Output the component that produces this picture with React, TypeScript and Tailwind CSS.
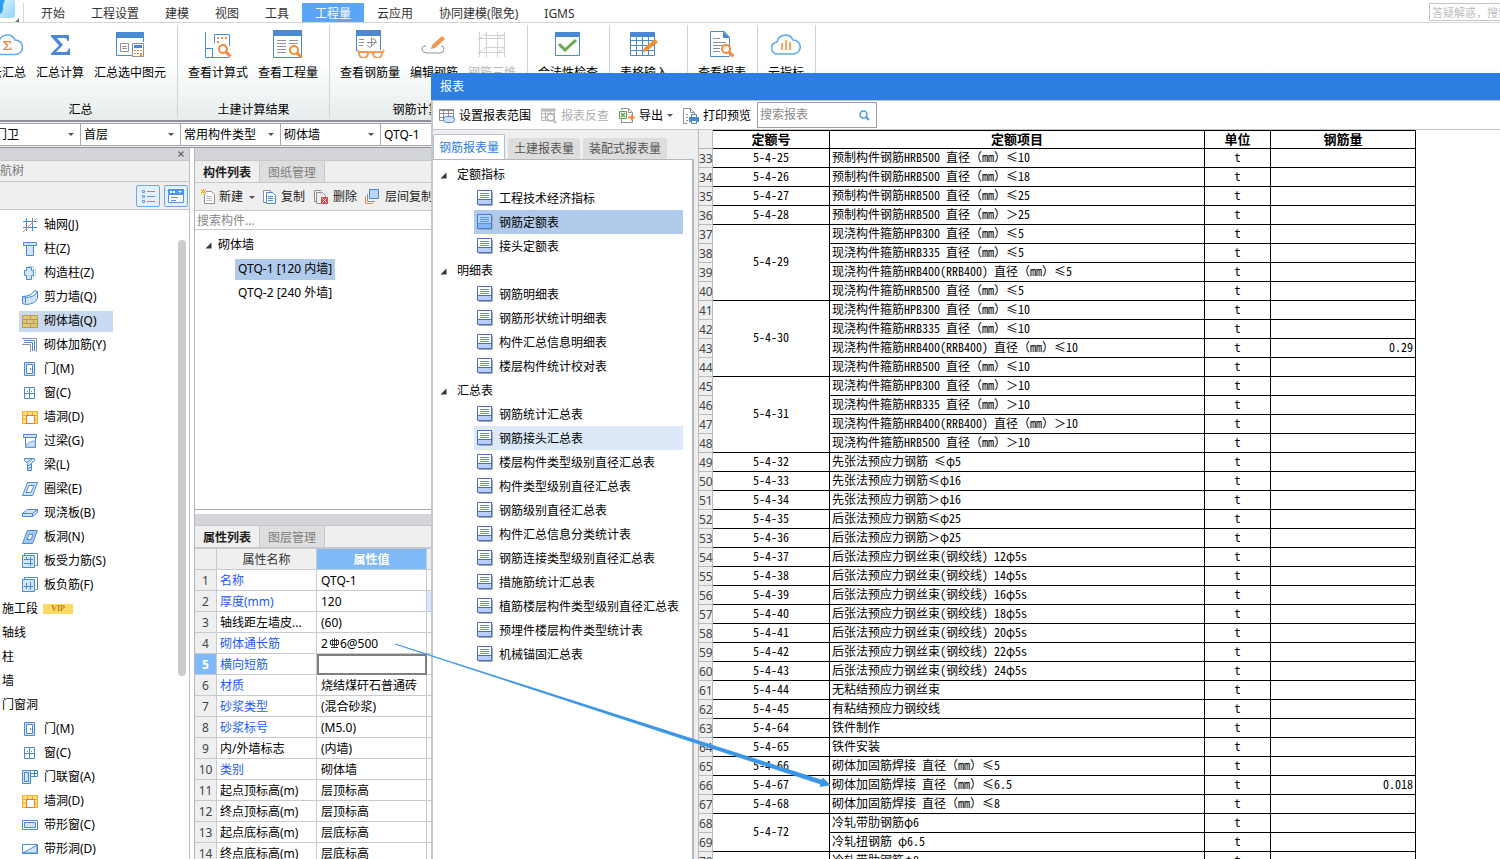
import { useState } from 'react'
import type { ReactNode } from 'react'

const B = '#4a8ad4'
const O = '#f5893d'
const G = '#8d9299'

const menus = ['开始', '工程设置', '建模', '视图', '工具', '工程量', '云应用', '协同建模(限免)', 'IGMS']

function Sigma({ color, x = 0, y = 0, s = 1 }: { color: string; x?: number; y?: number; s?: number }) {
  return (
    <path
      transform={`translate(${x} ${y}) scale(${s})`}
      d="M0 0h18v6h-1.500q-.5-3-3.500-3H6l6 7-7 7h9q3 0 3.500-3.500H19V20H0v-1.500L8 10.500 0 1.500z"
      fill={color}
    />
  )
}

function Magnifier({ x, y, color = O }: { x: number; y: number; color?: string }) {
  return (
    <g transform={`translate(${x} ${y})`} fill="none" stroke={color}>
      <circle cx="5" cy="5" r="4" strokeWidth="2" fill="#fff" />
      <path d="M8 8l4.500 4.500" strokeWidth="3" />
    </g>
  )
}

const ribbonIcons: Record<string, ReactNode> = {
  cloudSum: (
    <>
      <path d="M7 24.500a6.500 6.500 0 01-1-13 8.500 8.500 0 0116-1.500 7.200 7.200 0 01.500 14.500z" fill="none" stroke="#62aaf3" strokeWidth="1.600" />
      <Sigma color={O} x={10} y={11} s={0.45} />
    </>
  ),
  sigma: <Sigma color={B} x={6} y={5} />,
  selected: (
    <>
      <path d="M1.500 4v21.500h16M28.500 4v8" stroke={B} fill="none" />
      <path d="M1 2h28v6H1z" fill={B} />
      <path d="M5.500 13.500h8v8h-8zM7 16.500h5M7 18.500h5" stroke={G} fill="none" />
      <path d="M17.500 13.500h11v13h-11z" stroke={G} fill="#fff" />
      <path d="M19 15h8v3h-8z" fill={B} />
      <path d="M19 20h2v1h-2zM22 20h2v1h-2zM25 20h2v1h-2zM19 23h2v1h-2zM22 23h2v1h-2zM25 23h2v3h-2z" fill={O} />
    </>
  ),
  formula: (
    <>
      <path d="M2.500 2v25.500H26M2.500 18.500h7v9M11.500 13V4.500h15V16" stroke={B} fill="none" />
      <path d="M14 7h2v2h-2zM18 7h2v2h-2zM22 7h2v2h-2zM14 11h2v2h-2z" fill={O} />
      <Magnifier x={15} y={14} />
    </>
  ),
  quantity: (
    <>
      <path d="M.500 4v23.500h28V4" stroke={B} fill="none" />
      <path d="M0 0h29v6H0z" fill={B} />
      <path d="M4 10.500h9M4 13.500h9M4 16.500h9M4 19.500h9M4 22.500h9M16 10.500h9M16 13.500h9" stroke={G} />
      <Magnifier x={16} y={15} color="#f0932b" />
    </>
  ),
  rebar: (
    <>
      <path d="M1.500 3v18M25.500 3v17" stroke={B} />
      <path d="M1 0h25v6H1z" fill={B} />
      <path d="M4 9.500h5M4 12.500h5M4 15.500h4M12 12.500h10M16.500 7.500v9q-3 2-4-1M16.500 9.500q4-2 4 2-1 4-4 4" stroke={G} fill="none" />
      <path d="M4 22h9v2q-1 4-4.500 4T4 24zM18 22h9v2q-1 4-4.500 4T18 24zM13 23q2.500-2 5 0M4 23l-1-3M27 23l2-3" fill="none" stroke="#f29b55" strokeWidth="2" />
    </>
  ),
  edit: (
    <>
      <path d="M7 16H5q-3 1-2 4 1 3 5 3h13q4 0 4-4 0-3-3-3" stroke={G} fill="none" />
      <path d="M12 19l1-4L23 6l3 3-10 9z" fill="#f29750" />
    </>
  ),
  mesh: (
    <path d="M2.500 2v25M9.500 2v25M20.500 2v25M27.500 2v25M1 8.500h26M1 22.500h26M8 5.500h20M8 17.500h20M1 23.500l8-6M1 9.500l8-6M20 23.500l8-6M20 9.500l8-6" stroke="#d2d2d2" fill="none" />
  ),
  check: (
    <>
      <path d="M2.500 5v20.500h24V5" stroke={B} fill="none" />
      <path d="M2 2h25v5H2z" fill={B} />
      <path d="M6 14l6 6 11-10" stroke="#69a84f" strokeWidth="3" fill="none" />
    </>
  ),
  tableInput: (
    <>
      <path d="M1.500 5v20.500h24V5M1 10.500h24M1 15.500h24M1 20.500h24M7.500 7v18M13.500 7v18M19.500 7v18" stroke={B} fill="none" />
      <path d="M1 2h25v5H1z" fill={B} />
      <path d="M14 22l1-4 11-9 3 3-11 9z" fill="#f0932b" />
    </>
  ),
  report: (
    <>
      <path d="M3.500 1.500h14l5 6v19h-19z" stroke={B} fill="none" />
      <path d="M16 1l7 7h-7z" fill={B} />
      <path d="M6 8.500h7M6 12.500h13M6 15.500h10M6 18.500h7M6 21.500h7" stroke={G} />
      <Magnifier x={14} y={14} />
    </>
  ),
  cloudChart: (
    <>
      <path d="M7 24a6 6 0 01-1-12 8.500 8.500 0 0116-2 7 7 0 01.500 14z" fill="none" stroke="#62aaf3" strokeWidth="1.600" />
      <path d="M11 13v7M15 10v10M19 12v8" stroke={O} strokeWidth="1.500" />
    </>
  ),
}

type Tool = { icon: string; text: string; disabled?: boolean }

const ribbon: { label?: string; cls: string; tools: Tool[] }[] = [
  {
    label: '汇总',
    cls: '-ml-4 w-[194px] px-px',
    tools: [
      { icon: 'cloudSum', text: '云汇总' },
      { icon: 'sigma', text: '汇总计算' },
      { icon: 'selected', text: '汇总选中图元' },
    ],
  },
  {
    label: '土建计算结果',
    cls: 'w-[152px] px-[5px]',
    tools: [
      { icon: 'formula', text: '查看计算式' },
      { icon: 'quantity', text: '查看工程量' },
    ],
  },
  {
    label: '钢筋计算结果',
    cls: 'w-[198px] px-[5px]',
    tools: [
      { icon: 'rebar', text: '查看钢筋量' },
      { icon: 'edit', text: '编辑钢筋' },
      { icon: 'mesh', text: '钢筋三维', disabled: true },
    ],
  },
  { cls: 'w-[82px] px-[5px]', tools: [{ icon: 'check', text: '合法性检查' }] },
  { cls: 'w-[78px] px-[5px]', tools: [{ icon: 'tableInput', text: '表格输入' }] },
  { cls: 'w-[70px] px-[5px]', tools: [{ icon: 'report', text: '查看报表' }] },
  { cls: 'w-[58px] px-[5px]', tools: [{ icon: 'cloudChart', text: '云指标' }] },
]

const F = '#d3e4f8'

const doorIcon = (
  <>
    <path d="M2.500 1.500h10v13h-10z" stroke={B} fill={F} />
    <path d="M4.500 3.500h6v9h-6z" stroke={B} fill="#fff" />
    <path d="M8 7h1v2H8z" fill={B} />
  </>
)
const windowIcon = (
  <>
    <path d="M2.500 2.500h10v11h-10zM7.500 2.500v11M2.500 8.500h10" stroke={B} fill="#fff" />
    <path d="M5 6.500h1M9 6.500h1" stroke={B} />
  </>
)
const holeIcon = (
  <>
    <path d="M.500 2.500h15v12H.500zM.500 6.500h15M.500 10.500h15M5.500 2.500v4M10.500 2.500v4" stroke="#f9ac1c" fill="#ffe08a" />
    <path d="M4.500 6.500h8v8h-8z" stroke="#ee7a2b" fill="#fff" />
  </>
)

const navIcons: Record<string, ReactNode> = {
  grid: (
    <>
      <path d="M4.500 1v13M10.500 1v13M1 4.500h14M1 10.500h14" stroke={B} />
      <path d="M1 15L15 1" stroke={O} />
    </>
  ),
  column: <path d="M1.500 1.500h13v3h-13zM4.500 4.500h7v10h-7z" stroke={B} fill={F} />,
  tieColumn: (
    <>
      <path d="M6.500 1.500h5v3h2v7h-2v3" stroke="#9fc3ee" strokeDasharray="2 1" fill="none" />
      <path d="M4.500 2.500h5v3h2v5h-2v4h-5v-4h-2v-5h2z" stroke={B} fill={F} />
    </>
  ),
  shear: <path d="M.500 7.500q9 0 12-6l3 1v7q-3 6-12 6l-3-1zM.500 7.500l3 1q9 0 12-6M3.500 8.500v6" stroke={B} fill={F} />,
  brick: <path d="M.500 2.500h15v12H.500zM.500 6.500h15M.500 10.500h15M8.500 2.500v4M4.500 6.500v4M11.500 6.500v4M8.500 10.500v4" stroke="#c09c3c" fill="#d8c887" />,
  brickBar: (
    <>
      <path d="M0 1.500h14.500V15M0 7.500h8.500V15" stroke={G} fill="none" />
      <path d="M2 3.500h10.500V14M2 5.500h8.500V14" stroke={B} fill="none" />
    </>
  ),
  door: doorIcon,
  window: windowIcon,
  hole: holeIcon,
  lintel: (
    <>
      <path d="M3.500 4.500h10v10h-10z" stroke={B} fill="#fff" />
      <path d="M4 11h3V9h3V8h3v6H4z" stroke="#7fb0e8" fill={F} />
      <path d="M1.500 1.500h13v3h-13z" stroke={B} fill={F} />
    </>
  ),
  beam: <path d="M2.500 1.500h10v2l-3 3v7h-4v-7l-3-3zM5 5l5-3M6 9l3-2M6 12l3-2" stroke={B} fill={F} />,
  ringBeam: <path fillRule="evenodd" d="M5.500 1.500h10l-5 13h-10zM7 4.500h5l-3 7H4z" stroke={B} fill={F} />,
  slab: <path d="M.500 8.500l5-4h10v3l-5 4H.500zM.500 8.500h10v3M10.500 8.500l5-4" stroke={B} fill={F} />,
  slabHole: <path fillRule="evenodd" d="M5.500 1.500h10l-5 13h-10zM7 5.500h4l-2 5H5z" stroke={B} fill="#a8c8ef" />,
  slabBar: (
    <>
      <path d="M2.500 2.500v-2h13v12h-2" stroke={B} fill="none" />
      <path d="M.500 2.500h12v12H.500zM2 6.500h9M2 10.500h9M4.500 4v3M8.500 4v9" stroke={B} fill={F} />
    </>
  ),
  slabNeg: (
    <>
      <path d="M2.500 2.500v-2h13v12h-2" stroke={B} fill="none" />
      <path d="M.500 2.500h12v12H.500zM2 9.500h9M4.500 6v6M8.500 5v8" stroke={B} fill={F} />
    </>
  ),
  doorWindow: (
    <>
      <path d="M.500 1.500h8v13h-8z" stroke={B} fill={F} />
      <path d="M2.500 3.500h4v9h-4z" stroke={B} fill={F} />
      <path d="M8.500 1.500h7v6h-7zM12.500 1.500v6M8.500 4.500h7" stroke={B} fill="#fff" />
    </>
  ),
  ribbonWindow: (
    <>
      <path d="M.500 3.500h15v9H.500z" stroke={B} fill="#fff" />
      <path d="M2.500 5.500h11v5h-11z" stroke={B} fill={F} />
    </>
  ),
  ribbonHole: (
    <>
      <path d="M.500 3.500h15v9H.500z" stroke={B} fill="#fff" />
      <path d="M1 12L15 4v8z" stroke={B} fill={F} />
    </>
  ),
}

const navItems: { text: string; icon?: string; vip?: boolean }[] = [
  { icon: 'grid', text: '轴网(J)' },
  { icon: 'column', text: '柱(Z)' },
  { icon: 'tieColumn', text: '构造柱(Z)' },
  { icon: 'shear', text: '剪力墙(Q)' },
  { icon: 'brick', text: '砌体墙(Q)' },
  { icon: 'brickBar', text: '砌体加筋(Y)' },
  { icon: 'door', text: '门(M)' },
  { icon: 'window', text: '窗(C)' },
  { icon: 'hole', text: '墙洞(D)' },
  { icon: 'lintel', text: '过梁(G)' },
  { icon: 'beam', text: '梁(L)' },
  { icon: 'ringBeam', text: '圈梁(E)' },
  { icon: 'slab', text: '现浇板(B)' },
  { icon: 'slabHole', text: '板洞(N)' },
  { icon: 'slabBar', text: '板受力筋(S)' },
  { icon: 'slabNeg', text: '板负筋(F)' },
  { text: '施工段', vip: true },
  { text: '轴线' },
  { text: '柱' },
  { text: '墙' },
  { text: '门窗洞' },
  { icon: 'door', text: '门(M)' },
  { icon: 'window', text: '窗(C)' },
  { icon: 'doorWindow', text: '门联窗(A)' },
  { icon: 'hole', text: '墙洞(D)' },
  { icon: 'ribbonWindow', text: '带形窗(C)' },
  { icon: 'ribbonHole', text: '带形洞(D)' },
]

const props: { name: string; value: ReactNode; blue?: boolean }[] = [
  { name: '名称', value: 'QTQ-1', blue: true },
  { name: '厚度(mm)', value: '120', blue: true },
  { name: '轴线距左墙皮...', value: '(60)' },
  {
    name: '砌体通长筋',
    value: (
      <span className="flex items-center">
        2
        <svg width="12" height="12" viewBox="0 0 12 12" fill="none" stroke="#333" aria-label="HRB400">
          <path d="M6.500 0v10M3 9.500h7M2.500 2.500h8v4h-8zM4.500 1v7M8.500 1v7" />
        </svg>
        6@500
      </span>
    ),
    blue: true,
  },
  { name: '横向短筋', value: '', blue: true },
  { name: '材质', value: '烧结煤矸石普通砖', blue: true },
  { name: '砂浆类型', value: '(混合砂浆)', blue: true },
  { name: '砂浆标号', value: '(M5.0)', blue: true },
  { name: '内/外墙标志', value: '(内墙)' },
  { name: '类别', value: '砌体墙', blue: true },
  { name: '起点顶标高(m)', value: '层顶标高' },
  { name: '终点顶标高(m)', value: '层顶标高' },
  { name: '起点底标高(m)', value: '层底标高' },
  { name: '终点底标高(m)', value: '层底标高' },
]

const reportTree = [
  { title: '定额指标', items: ['工程技术经济指标', '钢筋定额表', '接头定额表'] },
  { title: '明细表', items: ['钢筋明细表', '钢筋形状统计明细表', '构件汇总信息明细表', '楼层构件统计校对表'] },
  {
    title: '汇总表',
    items: [
      '钢筋统计汇总表',
      '钢筋接头汇总表',
      '楼层构件类型级别直径汇总表',
      '构件类型级别直径汇总表',
      '钢筋级别直径汇总表',
      '构件汇总信息分类统计表',
      '钢筋连接类型级别直径汇总表',
      '措施筋统计汇总表',
      '植筋楼层构件类型级别直径汇总表',
      '预埋件楼层构件类型统计表',
      '机械锚固汇总表',
    ],
  },
]

// code, then one entry per row of that code
const quotas: { code: string; rows: { text: string; qty?: string }[] }[] = [
  { code: '5-4-25', rows: [{ text: '预制构件钢筋HRB500 直径（mm）≤10' }] },
  { code: '5-4-26', rows: [{ text: '预制构件钢筋HRB500 直径（mm）≤18' }] },
  { code: '5-4-27', rows: [{ text: '预制构件钢筋HRB500 直径（mm）≤25' }] },
  { code: '5-4-28', rows: [{ text: '预制构件钢筋HRB500 直径（mm）＞25' }] },
  {
    code: '5-4-29',
    rows: [
      { text: '现浇构件箍筋HPB300 直径（mm）≤5' },
      { text: '现浇构件箍筋HRB335 直径（mm）≤5' },
      { text: '现浇构件箍筋HRB400(RRB400) 直径（mm）≤5' },
      { text: '现浇构件箍筋HRB500 直径（mm）≤5' },
    ],
  },
  {
    code: '5-4-30',
    rows: [
      { text: '现浇构件箍筋HPB300 直径（mm）≤10' },
      { text: '现浇构件箍筋HRB335 直径（mm）≤10' },
      { text: '现浇构件箍筋HRB400(RRB400) 直径（mm）≤10', qty: '0.29' },
      { text: '现浇构件箍筋HRB500 直径（mm）≤10' },
    ],
  },
  {
    code: '5-4-31',
    rows: [
      { text: '现浇构件箍筋HPB300 直径（mm）＞10' },
      { text: '现浇构件箍筋HRB335 直径（mm）＞10' },
      { text: '现浇构件箍筋HRB400(RRB400) 直径（mm）＞10' },
      { text: '现浇构件箍筋HRB500 直径（mm）＞10' },
    ],
  },
  { code: '5-4-32', rows: [{ text: '先张法预应力钢筋 ≤φ5' }] },
  { code: '5-4-33', rows: [{ text: '先张法预应力钢筋≤φ16' }] },
  { code: '5-4-34', rows: [{ text: '先张法预应力钢筋＞φ16' }] },
  { code: '5-4-35', rows: [{ text: '后张法预应力钢筋≤φ25' }] },
  { code: '5-4-36', rows: [{ text: '后张法预应力钢筋＞φ25' }] },
  { code: '5-4-37', rows: [{ text: '后张法预应力钢丝束(钢绞线) 12φ5s' }] },
  { code: '5-4-38', rows: [{ text: '后张法预应力钢丝束(钢绞线) 14φ5s' }] },
  { code: '5-4-39', rows: [{ text: '后张法预应力钢丝束(钢绞线) 16φ5s' }] },
  { code: '5-4-40', rows: [{ text: '后张法预应力钢丝束(钢绞线) 18φ5s' }] },
  { code: '5-4-41', rows: [{ text: '后张法预应力钢丝束(钢绞线) 20φ5s' }] },
  { code: '5-4-42', rows: [{ text: '后张法预应力钢丝束(钢绞线) 22φ5s' }] },
  { code: '5-4-43', rows: [{ text: '后张法预应力钢丝束(钢绞线) 24φ5s' }] },
  { code: '5-4-44', rows: [{ text: '无粘结预应力钢丝束' }] },
  { code: '5-4-45', rows: [{ text: '有粘结预应力钢绞线' }] },
  { code: '5-4-64', rows: [{ text: '铁件制作' }] },
  { code: '5-4-65', rows: [{ text: '铁件安装' }] },
  { code: '5-4-66', rows: [{ text: '砌体加固筋焊接 直径（mm）≤5' }] },
  { code: '5-4-67', rows: [{ text: '砌体加固筋焊接 直径（mm）≤6.5', qty: '0.018' }] },
  { code: '5-4-68', rows: [{ text: '砌体加固筋焊接 直径（mm）≤8' }] },
  { code: '5-4-72', rows: [{ text: '冷轧带肋钢筋φ6' }, { text: '冷轧扭钢筋 φ6.5' }] },
  { code: '5-4-73', rows: [{ text: '冷轧带肋钢筋φ8' }, { text: '冷轧扭钢筋 φ8' }] },
]

let line = 33
const quotaRows = quotas.flatMap(q =>
  q.rows.map((r, i) => ({ ...r, no: line++, code: i === 0 ? q.code : null, span: q.rows.length }))
)

function Caret() {
  return (
    <svg width="6" height="3" viewBox="0 0 6 3" className="shrink-0">
      <path d="M0 0h6L3 3z" fill="#555" />
    </svg>
  )
}

function Expanded() {
  return (
    <svg width="7" height="7" viewBox="0 0 7 7" className="shrink-0">
      <path d="M6.500.500v6h-6z" fill="#333" />
    </svg>
  )
}

function Ribbon() {
  return (
    <div className="flex h-[97px] shrink-0 bg-linear-to-b from-white from-40% to-[#e6ecec] pt-0.5 pb-0.5">
      {ribbon.map((g, i) => (
        <section key={i} className={`flex shrink-0 flex-col justify-between border-r border-[#d0d3d6] pt-[5px] ${g.cls}`}>
          <div className="flex">
            {g.tools.map(t => (
              <button key={t.text} disabled={t.disabled} className="flex flex-col items-center gap-[7px] px-[5px] whitespace-nowrap disabled:text-[#b9b9b9]">
                <svg width="30" height="28" viewBox="0 0 30 28">{ribbonIcons[t.icon]}</svg>
                {t.text}
              </button>
            ))}
          </div>
          {g.label && <div className="text-center">{g.label}</div>}
        </section>
      ))}
    </div>
  )
}

function Filter({ label, value, cls }: { label: string; value: string; cls: string }) {
  return (
    <div className={`relative flex shrink-0 items-center border border-l-0 border-[#a9a9a9] bg-white ${cls}`}>
      <select aria-label={label} className="h-full w-full appearance-none pl-[3px] outline-none">
        <option>{value}</option>
      </select>
      <span className="pointer-events-none absolute right-1.5"><Caret /></span>
    </div>
  )
}

function NavPanel() {
  const [active, setActive] = useState(4)
  return (
    <aside className="flex w-[190px] shrink-0 flex-col border-r border-[#bfc0c6]">
      <div className="flex h-[13px] shrink-0 items-center justify-end border-b border-[#c5c5cc] bg-[#d4d5da] pr-[5px]">
        <button aria-label="关闭">
          <svg width="6" height="6" viewBox="0 0 6 6" stroke="#666" strokeWidth="1.200"><path d="M.500.500l5 5M5.500.500l-5 5" /></svg>
        </button>
      </div>
      <div className="flex h-[21px] shrink-0 items-center border-b border-[#c8c8cc] bg-[#efefef] text-[#777]">航树</div>
      <div className="flex h-7 shrink-0 items-center justify-end gap-1 border-b border-[#c8c8cc] bg-[#efefef] pr-px">
        <button aria-label="列表" className="flex h-[22px] w-6 items-center justify-center rounded-xs border border-[#6aa9ee] bg-[#e4f0fd]">
          <svg width="14" height="14" viewBox="0 0 14 14" fill="none" stroke="#5b9fe8">
            <path d="M1.500 1.500h2v2h-2zM1.500 6.500h2v2h-2zM1.500 11.500h2v2h-2zM6 2.500h8M6 7.500h8M6 12.500h8" />
          </svg>
        </button>
        <button aria-label="面板" className="flex h-[22px] w-6 items-center justify-center rounded-xs border border-[#6aa9ee] bg-[#e4f0fd]">
          <svg width="16" height="14" viewBox="0 0 16 14">
            <path d="M.500.500h15v13H.500z" fill="#fff" stroke="#4f97e6" />
            <path d="M0 0h16v6H0z" fill="#4f97e6" />
            <path d="M2 2h2v2H2zM5 2h2v2H5zM10 2h4l-2 2z" fill="#fff" />
            <path d="M3 8.500h7M3 11.500h5" stroke="#4f97e6" />
          </svg>
        </button>
      </div>
      <div className="relative min-h-0 flex-1 overflow-hidden bg-white">
        <ul className="pt-[3px]">
          {navItems.map((n, i) => (
            <li key={i} className="flex h-6 items-center">
              {n.icon ? (
                <button
                  onClick={() => setActive(i)}
                  className={`ml-[19px] flex h-[21px] items-center gap-1.5 pr-4 pl-[3px] ${i === active ? 'bg-[#c9d9ef]' : ''}`}
                >
                  <svg width="16" height="16" viewBox="0 0 16 16">{navIcons[n.icon]}</svg>
                  {n.text}
                </button>
              ) : (
                <button className="flex items-center gap-[5px] pl-0.5">
                  {n.text}
                  {n.vip && (
                    <span className="flex h-2.5 w-[30px] items-center justify-center bg-[#ffd964] text-[8px] font-bold text-[#b8860b] [font-family:'Liberation_Serif',serif]">
                      VIP
                    </span>
                  )}
                </button>
              )}
            </li>
          ))}
        </ul>
        <div className="absolute top-[30px] right-[3px] h-[436px] w-2 rounded-full bg-[#cbcbcb]" />
      </div>
    </aside>
  )
}

function PanelTabs({ tabs }: { tabs: [string, string] }) {
  return (
    <div className="flex h-[22px] shrink-0 border-b border-[#c8c8cc] bg-[#efefef]">
      <button className="border-r border-[#c8c8cc] px-2 pt-0.5 font-bold text-[#222]">{tabs[0]}</button>
      <button className="border-r border-[#c8c8cc] bg-[#dedede] px-2 pt-0.5 text-[#808080]">{tabs[1]}</button>
    </div>
  )
}

function ComponentList() {
  return (
    <section className="flex h-[362px] shrink-0 flex-col border-b border-[#a9a9ad]">
      <div className="h-[13px] shrink-0 border-b border-[#c5c5cc] bg-[#d4d5da]" />
      <PanelTabs tabs={['构件列表', '图纸管理']} />
      <div className="flex h-7 shrink-0 items-center gap-2 border-b border-[#c8c8cc] bg-[#efefef] pt-px pl-1.5 whitespace-nowrap text-[#222]">
        <button className="flex items-center gap-1">
          <svg width="14" height="16" viewBox="0 0 14 16" fill="none">
            <path d="M3.500 2.500h7l3 3v9h-10z" stroke={G} fill="#fff" />
            <path d="M5 7.500h6M5 9.500h6M5 11.500h6" stroke="#c0c0c0" />
            <path d="M0 0h5v5H0z" fill="#f7b84a" />
            <path d="M1 .500h1M3 .500h1M0 2.500h1M4 2.500h1M1 4.500h1M3 4.500h1" stroke="#fff" />
          </svg>
          新建
          <span className="ml-0.5"><Caret /></span>
        </button>
        <button className="flex items-center gap-1">
          <svg width="14" height="16" viewBox="0 0 14 16" fill="none">
            <path d="M.500 1.500h7v12h-7z" stroke={G} fill="#fff" />
            <path d="M3.500 3.500h6l3 3v8h-9z" stroke={B} fill="#fff" />
            <path d="M5 7.500h5M5 9.500h5M5 11.500h5" stroke={B} />
          </svg>
          复制
        </button>
        <button className="flex items-center gap-1">
          <svg width="16" height="16" viewBox="0 0 16 16" fill="none">
            <path d="M3.500 12.500h-2v-11h7M3.500 3.500h6l3 3v8h-9z" stroke={G} />
            <path d="M8 8h7v7H8z" fill="#d9484b" />
            <path d="M9.500 9.500l4 4M13.500 9.500l-4 4" stroke="#fff" />
          </svg>
          删除
        </button>
        <button className="flex items-center gap-[5px]">
          <svg width="15" height="16" viewBox="0 0 15 16" fill="none">
            <path d="M.500 7v7.500H8" stroke={O} />
            <path d="M2.500 5v7.500H10" stroke={G} />
            <path d="M4.500.500h9v9h-9z" stroke={B} fill="#b8d6f9" />
          </svg>
          层间复制
        </button>
      </div>
      <input aria-label="搜索构件" placeholder="搜索构件..." className="h-[19px] shrink-0 border-b border-[#c8c8cc] bg-white pl-0.5 outline-none placeholder:text-[#888]" />
      <ul className="pt-[3px] pl-2.5">
        <li className="flex h-6 items-center gap-1.5"><Expanded />砌体墙</li>
        <li className="flex h-6 items-center pl-[30px]">
          <button className="h-[21px] bg-[#b0caec] px-[3px]">QTQ-1 [120 内墙]</button>
        </li>
        <li className="flex h-6 items-center pl-[30px]">
          <button className="h-[21px] px-[3px]">QTQ-2 [240 外墙]</button>
        </li>
      </ul>
    </section>
  )
}

function PropertyList() {
  const cell = 'h-[21px] border-r border-b border-[#c8cacd] p-0 pt-0.5'
  return (
    <section className="flex min-h-0 flex-1 flex-col overflow-hidden">
      <div className="h-3 shrink-0 border-b border-[#c5c5cc] bg-[#d4d5da]" />
      <PanelTabs tabs={['属性列表', '图层管理']} />
      <table className="w-full table-fixed border-separate border-spacing-0 border-t border-[#c8cacd] text-left whitespace-nowrap">
        <colgroup>
          <col className="w-[22px]" />
          <col className="w-[100px]" />
          <col className="w-[110px]" />
          <col />
        </colgroup>
        <thead>
          <tr>
            <th className={`${cell} bg-[#efefef]`} />
            <th className={`${cell} bg-[#efefef] text-center font-normal text-[#333]`}>属性名称</th>
            <th className={`${cell} bg-[#80b9f8] text-center font-bold text-white`}>属性值</th>
            <th className={`${cell} bg-[#efefef]`} />
          </tr>
        </thead>
        <tbody>
          {props.map((p, i) => (
            <tr key={i}>
              <th className={`${cell} text-center ${i === 4 ? 'bg-[#80b9f8] font-bold text-white' : 'bg-[#efefef] font-normal text-[#444]'}`}>{i + 1}</th>
              <td className={`${cell} overflow-hidden pl-[3px] ${p.blue ? 'text-[#1c5cf5]' : ''}`}>{p.name}</td>
              <td className={`${cell} pl-1 ${i === 4 ? 'outline-2 -outline-offset-2 outline-[#808080]' : ''}`}>{p.value}</td>
              <td className={`${cell} ${i === 1 ? 'bg-[#d8e9fb]' : ''}`} />
            </tr>
          ))}
        </tbody>
      </table>
    </section>
  )
}

function ReportIcon({ active }: { active: boolean }) {
  return (
    <svg width="16" height="16" viewBox="0 0 16 16" className="shrink-0">
      <path d="M2 15.500h13.500V2" stroke="#a9adb5" fill="none" />
      <path d="M.500.500h14v14H.500z" fill={active ? '#b3d4fb' : '#fff'} stroke={active ? '#3f78d0' : '#4a6fc9'} />
      <path d="M1 10h13v4H1z" fill={active ? '#84b4f8' : '#b9ceff'} />
      <path d="M3 3.500h9M3 5.500h9M3 7.500h9" stroke={active ? '#5b93e2' : '#6f8fdc'} />
      <path d="M1 9.500h13" stroke={active ? '#5b93e2' : '#4a6fc9'} />
    </svg>
  )
}

function ReportNav() {
  const [selected, setSelected] = useState('钢筋定额表')
  return (
    <div className="flex w-[261px] shrink-0 flex-col">
      <div className="flex h-[29px] shrink-0 items-end gap-[3px]">
        <button className="h-[25px] rounded-t-xs border border-b-0 border-[#b9bfca] bg-white px-[5px] pt-0.5 text-[#2c7ee1]">钢筋报表量</button>
        <button className="h-[21px] rounded-t-xs bg-[#dddddd] px-1.5 text-[#555]">土建报表量</button>
        <button className="h-[21px] rounded-t-xs bg-[#dddddd] px-1.5 text-[#555]">装配式报表量</button>
      </div>
      <div className="min-h-0 flex-1 overflow-hidden border-t border-r-2 border-[#b5b7bd] bg-white pt-0.5">
        {reportTree.map(g => (
          <div key={g.title}>
            <div className="flex h-6 items-center gap-2.5 pt-0.5 pl-[7px]"><Expanded />{g.title}</div>
            {g.items.map(t => (
              <button
                key={t}
                onClick={() => setSelected(t)}
                className={`ml-[41px] flex h-6 w-[209px] items-center gap-1.5 pl-[3px] whitespace-nowrap ${t === selected ? 'bg-[#b0caec]' : ''} ${t === '钢筋接头汇总表' && t !== selected ? 'bg-[#dde9f8]' : ''}`}
              >
                <ReportIcon active={t === selected} />
                <span className="pt-0.5">{t}</span>
              </button>
            ))}
          </div>
        ))}
      </div>
    </div>
  )
}

function QuotaTable() {
  const cell = 'h-[19px] border-r border-b border-black p-0 font-normal'
  const head = 'h-[19px] border-t border-r border-b border-black p-0 pb-0.5 text-[13px] leading-[14px] font-bold'
  return (
    <table className="w-[717px] shrink-0 table-fixed self-start border-separate border-spacing-0 bg-white leading-4 whitespace-nowrap text-black [font-family:'Noto_Sans_Mono_CJK_SC','Liberation_Mono','Noto_Sans_CJK_SC',monospace] [font-feature-settings:'liga'_0,'ccmp'_0,'dlig'_0]">
      <colgroup>
        <col className="w-3.5" />
        <col className="w-[117px]" />
        <col className="w-[375px]" />
        <col className="w-[66px]" />
        <col className="w-[145px]" />
      </colgroup>
      <thead>
        <tr>
          <th className="border-r border-b border-[#b9bbc0] bg-[#efefef] p-0" />
          <th className={head}>定额号</th>
          <th className={head}>定额项目</th>
          <th className={head}>单位</th>
          <th className={head}>钢筋量</th>
        </tr>
      </thead>
      <tbody>
        {quotaRows.map(r => (
          <tr key={r.no}>
            <th className="h-[19px] border-r border-b border-[#b9bbc0] bg-[#efefef] p-0 pt-0.5 font-normal text-[#444] [font-family:'Noto_Sans',sans-serif]">{r.no}</th>
            {r.code && <td rowSpan={r.span} className={`${cell} text-center ${r.span > 1 ? 'pb-1' : 'pb-0.5'}`}>{r.code}</td>}
            <td className={`${cell} pb-0.5 pl-0.5`}>{r.text}</td>
            <td className={`${cell} pb-0.5 text-center`}>t</td>
            <td className={`${cell} pr-0.5 pb-0.5 text-right`}>{r.qty}</td>
          </tr>
        ))}
      </tbody>
    </table>
  )
}

function ReportDialog() {
  return (
    <div role="dialog" aria-label="报表" className="absolute top-[73px] right-0 bottom-0 left-[431px] flex flex-col overflow-hidden bg-white">
      <h1 className="flex h-[27px] shrink-0 items-center bg-[#2c7ee1] pl-[9px] text-white">报表</h1>
      <div className="flex min-h-0 flex-1 flex-col border-l-2 border-[#c3c7d0]">
        <div className="flex h-[30px] shrink-0 items-center gap-1.5 border-t border-b border-[#c5c5cc] pl-1.5 whitespace-nowrap">
          <div className="flex items-center gap-2.5 pt-px">
            <button className="flex items-center gap-1">
              <svg width="16" height="16" viewBox="0 0 16 16" fill="none">
                <path d="M.500 1.500h14v11H.500zM.500 5.500h14M.500 9.500h14M4.500 1.500v11M9.500 1.500v11M14.500 1.500v6" stroke={G} />
                <path d="M0 1h15v2H0z" fill="#8d9299" />
                <rect x="4.500" y="8.500" width="11" height="6" rx="3" fill="#d3e4f8" stroke={B} />
              </svg>
              设置报表范围
            </button>
            <button disabled className="flex items-center gap-1 text-[#b0b0b0]">
              <svg width="16" height="16" viewBox="0 0 16 16" fill="none" stroke="#b8b8b8">
                <path d="M.500 1.500h13v11H.500zM.500 5.500h13M.500 9.500h13M4.500 1.500v11M9.500 1.500v11" />
                <path d="M0 1h14v2H0z" fill="#b8b8b8" />
                <circle cx="9.500" cy="9.500" r="3.500" fill="#fff" strokeWidth="1.500" />
                <path d="M12 12l3 3" strokeWidth="2" />
              </svg>
              报表反查
            </button>
            <button className="flex items-center gap-1">
              <svg width="16" height="16" viewBox="0 0 16 16" fill="none">
                <path d="M2.500 2V.500h7l4 4v10h-11V10M9.500.500v4h4" stroke={G} />
                <path d="M.500 3.500h7v7h-7z" stroke="#5fa34b" fill="#fff" />
                <path d="M2 5l4 4M6 5L2 9" stroke="#5fa34b" strokeWidth="1.500" />
                <path d="M9 9.500h4" stroke={O} strokeWidth="2" />
                <path d="M12 6l4 3.500-4 3.500z" fill={O} />
              </svg>
              导出
              <Caret />
            </button>
            <button className="flex items-center gap-1">
              <svg width="16" height="16" viewBox="0 0 16 16" fill="none">
                <path d="M4 15.500H.500V.500h7l4 4V7M7.500.500v4h4M3 6.500h2M3 9.500h2M3 12.500h2" stroke={G} />
                <path d="M8.500 9V6.500h5V9" stroke={B} fill="#fff" />
                <path d="M6 9h10v5H6z" fill={B} />
                <path d="M8.500 12.500h5v3h-5z" stroke={B} fill="#fff" />
              </svg>
              打印预览
            </button>
          </div>
          <label className="flex h-[26px] w-[120px] items-center border border-[#9da0a6] bg-white pr-1.5 pl-0.5">
            <input aria-label="搜索报表" placeholder="搜索报表" className="min-w-0 flex-1 outline-none placeholder:text-[#8a8a8a]" />
            <svg width="11" height="11" viewBox="0 0 11 11" fill="none" stroke="#4f9bd0">
              <circle cx="4.500" cy="4.500" r="3.500" strokeWidth="1.500" />
              <path d="M7 7l3 3" strokeWidth="2" />
            </svg>
          </label>
        </div>
        <div className="flex min-h-0 flex-1 overflow-hidden bg-white">
          <div className="flex shrink-0 bg-[#efefef] pr-1"><ReportNav /></div>
          <div className="flex min-w-0 flex-1 overflow-hidden border-l border-[#b9bbc0]"><QuotaTable /></div>
        </div>
      </div>
    </div>
  )
}

export default function App() {
  return (
    <div className="relative flex h-screen flex-col overflow-hidden bg-white text-xs leading-4 text-black [font-family:'Noto_Sans','Noto_Sans_CJK_SC',sans-serif]">
      <header className="flex h-[23px] shrink-0 items-end border-b border-[#d3d5d8] whitespace-nowrap">
        <div className="flex h-full w-7 shrink-0 items-start">
          <svg width="24" height="22" viewBox="0 0 24 22">
            <defs>
              <linearGradient id="logo" x1="0" y1="0" x2="1" y2="1">
                <stop offset="0" stopColor="#d9f3fd" />
                <stop offset="1" stopColor="#8fd3f5" />
              </linearGradient>
            </defs>
            <path d="M0 0h15v14q0 4-4 4H0z" fill="url(#logo)" />
            <path d="M0 0h5q-2 3-2 8 0 5-3 6z" fill="#2f9df0" />
            <path d="M19 18v4h-4z" fill="#777" />
            <path d="M23.500 3v19" stroke="#d3d5d8" />
          </svg>
        </div>
        <nav className="flex flex-1">
          {menus.map(m => (
            <button key={m} className={`h-[19px] px-[13px] pt-0.5 ${m === '工程量' ? 'bg-[#5aa5f5] text-white' : 'text-[#333]'}`}>{m}</button>
          ))}
        </nav>
        <input aria-label="搜索" placeholder="答疑解惑，搜索一下" className="mb-px h-[18px] w-[71px] border border-r-0 border-[#c4c4c4] pl-0.5 text-[11px] outline-none placeholder:text-[#bdbdbd]" />
      </header>
      <Ribbon />
      <div className="flex h-7 shrink-0 items-center border-t-2 border-b border-[#8e929b] bg-[#efefef] py-px">
        <Filter label="楼栋" value="门卫" cls="-ml-2 h-[23px] w-[89px]" />
        <Filter label="楼层" value="首层" cls="h-[23px] w-[100px]" />
        <Filter label="构件分类" value="常用构件类型" cls="h-[23px] w-[100px]" />
        <Filter label="构件类型" value="砌体墙" cls="h-[23px] w-[100px]" />
        <Filter label="构件" value="QTQ-1" cls="h-[23px] w-[100px]" />
      </div>
      <div className="flex min-h-0 flex-1">
        <NavPanel />
        <main className="ml-1 flex min-w-0 flex-1 flex-col gap-1 border-l border-[#b5b7bd]">
          <ComponentList />
          <PropertyList />
        </main>
      </div>
      <ReportDialog />
      <svg width="440" height="160" viewBox="0 0 440 160" className="pointer-events-none absolute top-[640px] left-[394px]">
        <path d="M1 4L428 140.300l.800-2.400L436 145l-10 1.500.800-2.400z" fill="#3b95e6" stroke="#3b95e6" strokeWidth=".800" />
      </svg>
    </div>
  )
}
